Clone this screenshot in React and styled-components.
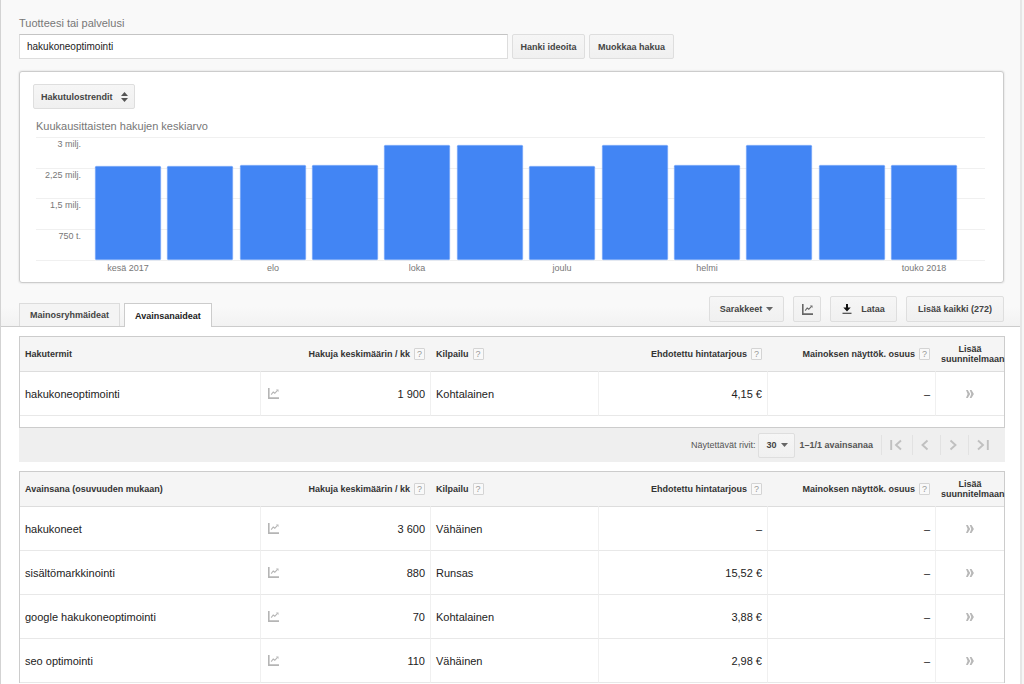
import React from 'react';
import styled, { createGlobalStyle, css } from 'styled-components';

const GlobalStyle = createGlobalStyle`
  * {
    box-sizing: border-box;
  }

  body {
    margin: 0;
    background: #f6f6f6;
    color: #222;
    font: 11px/14px 'Liberation Sans', Arial, sans-serif;
  }

  button,
  input,
  select {
    margin: 0;
    font-family: inherit;
  }
`;

const Page = styled.div`
  min-height: 100vh;
  margin-right: 2px;
  border-left: 1px solid #d3d3d3;
  border-right: 2px solid #e6e6e6;
  background: #fff;
`;

const TopArea = styled.header`
  padding: 16px 16px 0 18px;
  border-bottom: 1px solid #ccc;
  background: linear-gradient(#f9f9f9, #f9f9f9 94%, #f2f2f2);
`;

const FieldLabel = styled.label`
  display: block;
  color: #777;
`;

const SearchRow = styled.form`
  display: flex;
  gap: 4px;
  margin-top: 4px;
`;

const SearchInput = styled.input`
  flex: 0 1 489px;
  min-width: 0;
  height: 25px;
  padding: 0 7px;
  border: 1px solid #ddd;
  border-top-color: #c4c4c4;
  background: #fff;
  color: #222;
  font-size: 10px;
`;

const buttonFace = css`
  border: 1px solid #dedede;
  border-radius: 2px;
  background: linear-gradient(#f6f6f6, #f0f0f0);
  color: #444;
  font-size: 9px;
  font-weight: bold;
`;

const Button = styled.button`
  ${buttonFace}
  display: inline-flex;
  align-items: center;
  justify-content: center;
  gap: ${({ $gap }) => $gap || 4}px;
  width: ${({ $width }) => $width}px;
  height: ${({ $tall }) => ($tall ? 26 : 25)}px;
  padding: 0;
  white-space: nowrap;
`;

const SelectBox = styled.div`
  position: relative;
  display: inline-flex;
  width: ${({ $width }) => $width}px;

  select {
    ${buttonFace}
    width: 100%;
    height: 25px;
    padding: 0 0 0 7px;
    appearance: none;
  }

  svg {
    position: absolute;
    top: 50%;
    right: 7px;
    transform: translateY(-50%);
    pointer-events: none;
  }
`;

const TrendPanel = styled.section`
  margin-top: 12px;
  padding: 12px 18px 8px 16px;
  border: 1px solid #ccc;
  border-radius: 3px;
  background: #fff;
  box-shadow: 0 0 1px 1px #ececec;

  ${SelectBox} {
    display: flex;
    margin-left: -3px;
  }
`;

const ChartTitle = styled.h2`
  margin: 10px 0 4px;
  color: #777;
  font-size: 11px;
  font-weight: normal;
`;

const ChartSvg = styled.svg`
  display: block;
  width: 100%;

  text {
    fill: #777;
    font-size: 9px;
  }
`;

const Toolbar = styled.div`
  display: flex;
  align-items: flex-end;
  justify-content: space-between;
  height: 43px;
`;

const Tabs = styled.div`
  display: flex;
  gap: 4px;
`;

const Tab = styled.button`
  height: 23px;
  padding: 0 10px;
  border: 1px solid #dcdcdc;
  border-bottom: 0;
  background: #f4f4f4;
  color: #444;
  font-size: 9px;
  font-weight: bold;

  ${({ $active }) =>
    $active &&
    css`
      height: 24px;
      margin-bottom: -1px;
      border-color: #ccc;
      background: #fff;
      color: #222;
    `}
`;

const Actions = styled.div`
  display: flex;
  gap: 9px;
  padding-bottom: 4px;
`;

const Results = styled.main`
  display: grid;
  gap: 9px;
  padding: 9px 15px 0 18px;
`;

const TableFrame = styled.div`
  padding-bottom: ${({ $footer }) => ($footer ? 11 : 0)}px;
  border: 1px solid #ccc;
  border-bottom-width: ${({ $footer }) => ($footer ? 1 : 0)}px;
`;

const Table = styled.table`
  width: 100%;
  border-spacing: 0;
  table-layout: fixed;
`;

const cell = css`
  padding: 0 5px;
  border-left: 1px solid transparent;
  text-align: ${({ $align }) => $align || 'left'};

  &:first-child {
    border-left: 0;
  }
`;

const HeadCell = styled.th`
  ${cell}
  width: ${({ $width }) => ($width ? `${$width}px` : 'auto')};
  height: 35px;
  border-bottom: 1px solid #ddd;
  background: #f5f5f5;
  color: #333;
  font-size: 9px;
  line-height: 10px;
`;

const HeadLabel = styled.span`
  display: inline-flex;
  align-items: center;
  gap: 4px;
  white-space: nowrap;
`;

const Help = styled.button`
  width: 11px;
  height: 12px;
  padding: 0;
  border: 1px solid #d4d4d4;
  border-radius: 1px;
  background: #f9f9f9;
  color: #999;
  font-size: 9px;
  line-height: 10px;
`;

const Cell = styled.td`
  ${cell}
  height: 44px;
  border-bottom: 1px solid #e8e8e8;
  border-left-color: #f0f0f0;
`;

const Volume = styled.div`
  display: flex;
  align-items: center;
  justify-content: space-between;
  padding-left: 2px;
`;

const IconButton = styled.button`
  display: inline-flex;
  padding: 0;
  border: 0;
  background: none;
`;

const Pager = styled.nav`
  display: flex;
  align-items: center;
  justify-content: flex-end;
  height: 34px;
  padding-right: 6px;
  background: #efefef;
  color: #555;
  font-size: 9px;

  ${SelectBox} {
    margin: 0 4px 0 3px;
  }
`;

const PagerCount = styled.strong`
  margin-right: 8px;
`;

const PagerButton = styled.button`
  display: flex;
  align-items: center;
  justify-content: center;
  width: ${({ $wide }) => ($wide ? 31 : 28)}px;
  height: 20px;
  padding: 0 3px 0 0;
  border: 0;
  border-left: 1px solid #e2e2e2;
  background: none;
`;

const months = [
  { label: 'kesä 2017', top: 29 },
  { top: 29 },
  { label: 'elo', top: 28 },
  { top: 28 },
  { label: 'loka', top: 8 },
  { top: 8 },
  { label: 'joulu', top: 29 },
  { top: 8 },
  { label: 'helmi', top: 28 },
  { top: 8 },
  { top: 28 },
  { label: 'touko 2018', top: 28 },
];

const gridLines = [
  { y: 0, label: '3 milj.' },
  { y: 31, label: '2,25 milj.' },
  { y: 61, label: '1,5 milj.' },
  { y: 92, label: '750 t.' },
  { y: 123 },
];

const searchTerms = [
  { keyword: 'hakukoneoptimointi', volume: '1 900', competition: 'Kohtalainen', bid: '4,15 €' },
];

const ideas = [
  { keyword: 'hakukoneet', volume: '3 600', competition: 'Vähäinen', bid: '–' },
  { keyword: 'sisältömarkkinointi', volume: '880', competition: 'Runsas', bid: '15,52 €' },
  { keyword: 'google hakukoneoptimointi', volume: '70', competition: 'Kohtalainen', bid: '3,88 €' },
  { keyword: 'seo optimointi', volume: '110', competition: 'Vähäinen', bid: '2,98 €' },
];

function CaretIcon() {
  return (
    <svg width="7" height="4" viewBox="0 0 7 4" aria-hidden="true">
      <path d="M0 0h7L3.5 4z" fill="#666" />
    </svg>
  );
}

function SortIcon() {
  return (
    <svg width="7" height="10" viewBox="0 0 7 10" aria-hidden="true">
      <path d="M0 4h7L3.5 0zM0 6h7L3.5 10z" fill="#555" />
    </svg>
  );
}

function TrendIcon({ color = '#b5b5b5' }) {
  return (
    <svg width="11" height="11" viewBox="0 0 11 11" fill="none" stroke={color} aria-hidden="true">
      <path d="M.8 0v10.1H11" strokeWidth="1.6" />
      <path d="M3.2 6.6 5.2 4 6.8 5.3 9.2 2.6" strokeWidth="1.1" />
      <path d="M8 1.6h2.5V4z" fill={color} stroke="none" />
    </svg>
  );
}

function DownloadIcon() {
  return (
    <svg width="10" height="10" viewBox="0 0 10 10" aria-hidden="true">
      <path d="M4 0h2v3.6h2.7L5 7.6 1.3 3.6H4z" fill="#111" />
      <path d="M.5 9.3h9" stroke="#444" strokeWidth="1.2" />
    </svg>
  );
}

function AddIcon() {
  return (
    <svg width="8" height="8" viewBox="0 0 8 8" fill="#b8b8b8" aria-hidden="true">
      <path d="M0 0h1.8l2.4 4-2.4 4H0l1.6-4zM3.7 0h1.8l2.4 4-2.4 4H3.7l1.6-4z" />
    </svg>
  );
}

const pagerPaths = {
  first: 'M1.2 1v10M11 1.5 6 6l5 4.5',
  previous: 'M8.5 1.5 3.5 6l5 4.5',
  next: 'M3.5 1.5 8.5 6l-5 4.5',
  last: 'M1 1.5 6 6l-5 4.5M10.8 1v10',
};

function PagerIcon({ name }) {
  return (
    <svg width="12" height="12" viewBox="0 0 12 12" fill="none" stroke="#c0c0c0" strokeWidth="1.9" aria-hidden="true">
      <path d={pagerPaths[name]} />
    </svg>
  );
}

function TrendChart() {
  return (
    <ChartSvg viewBox="0 0 949 137" role="img" aria-label="Kuukausittaisten hakujen keskiarvo">
      {gridLines.map(({ y, label }) => (
        <g key={y}>
          <rect x="0" y={y} width="949" height="1" fill="#f0f0f0" />
          {label && (
            <text x="45" y={y + 10} textAnchor="end">
              {label}
            </text>
          )}
        </g>
      ))}
      {months.map(({ label, top }, index) => {
        const x = 59 + Math.round(index * 72.36);
        return (
          <g key={x}>
            <rect
              x={x + 0.25}
              y={top + 0.25}
              width="65.5"
              height={122.5 - top}
              rx="1"
              fill="#4285f4"
              stroke="#8ab3f8"
              strokeWidth="0.5"
            />
            {label && (
              <text x={x + 33} y="134" textAnchor="middle">
                {label}
              </text>
            )}
          </g>
        );
      })}
    </ChartSvg>
  );
}

function HeadWithHelp({ children, ...props }) {
  return (
    <HeadCell {...props}>
      <HeadLabel>
        {children}
        <Help type="button" aria-label={`Ohje: ${children}`}>
          ?
        </Help>
      </HeadLabel>
    </HeadCell>
  );
}

function KeywordTable({ title, rows, footer }) {
  return (
    <TableFrame $footer={footer}>
      <Table>
        <thead>
          <tr>
            <HeadCell>{title}</HeadCell>
            <HeadWithHelp $width={170} $align="right">Hakuja keskimäärin / kk</HeadWithHelp>
            <HeadWithHelp $width={168}>Kilpailu</HeadWithHelp>
            <HeadWithHelp $width={169} $align="right">Ehdotettu hintatarjous</HeadWithHelp>
            <HeadWithHelp $width={168} $align="right">Mainoksen näyttök. osuus</HeadWithHelp>
            <HeadCell $width={69} $align="center">Lisää suunnitelmaan</HeadCell>
          </tr>
        </thead>
        <tbody>
          {rows.map((row) => (
            <tr key={row.keyword}>
              <Cell>{row.keyword}</Cell>
              <Cell>
                <Volume>
                  <IconButton type="button" aria-label="Näytä trendi">
                    <TrendIcon />
                  </IconButton>
                  {row.volume}
                </Volume>
              </Cell>
              <Cell>{row.competition}</Cell>
              <Cell $align="right">{row.bid}</Cell>
              <Cell $align="right">–</Cell>
              <Cell $align="center">
                <IconButton type="button" aria-label="Lisää suunnitelmaan">
                  <AddIcon />
                </IconButton>
              </Cell>
            </tr>
          ))}
        </tbody>
      </Table>
    </TableFrame>
  );
}

export default function App() {
  return (
    <>
      <GlobalStyle />
      <Page>
        <TopArea>
          <FieldLabel htmlFor="product">Tuotteesi tai palvelusi</FieldLabel>
          <SearchRow onSubmit={(event) => event.preventDefault()}>
            <SearchInput id="product" type="text" defaultValue="hakukoneoptimointi" />
            <Button type="submit" $width={73}>Hanki ideoita</Button>
            <Button type="button" $width={85}>Muokkaa hakua</Button>
          </SearchRow>

          <TrendPanel>
            <SelectBox $width={102}>
              <select aria-label="Kaavio" defaultValue="trends">
                <option value="trends">Hakutulostrendit</option>
              </select>
              <SortIcon />
            </SelectBox>
            <ChartTitle>Kuukausittaisten hakujen keskiarvo</ChartTitle>
            <TrendChart />
          </TrendPanel>

          <Toolbar>
            <Tabs role="tablist">
              <Tab type="button" role="tab" aria-selected="false">Mainosryhmäideat</Tab>
              <Tab type="button" role="tab" aria-selected="true" $active>Avainsanaideat</Tab>
            </Tabs>
            <Actions>
              <Button type="button" $tall $width={75}>
                Sarakkeet
                <CaretIcon />
              </Button>
              <Button type="button" $tall $width={28} aria-label="Kaavio">
                <TrendIcon color="#666" />
              </Button>
              <Button type="button" $tall $width={67} $gap={9}>
                <DownloadIcon />
                Lataa
              </Button>
              <Button type="button" $tall $width={98}>Lisää kaikki (272)</Button>
            </Actions>
          </Toolbar>
        </TopArea>

        <Results>
          <div>
            <KeywordTable title="Hakutermit" rows={searchTerms} footer />
            <Pager aria-label="Sivutus">
              <label htmlFor="row-count">Näytettävät rivit:</label>
              <SelectBox $width={37}>
                <select id="row-count" defaultValue="30">
                  <option value="30">30</option>
                </select>
                <CaretIcon />
              </SelectBox>
              <PagerCount>1–1/1 avainsanaa</PagerCount>
              <PagerButton type="button" $wide aria-label="Ensimmäinen sivu">
                <PagerIcon name="first" />
              </PagerButton>
              <PagerButton type="button" aria-label="Edellinen sivu">
                <PagerIcon name="previous" />
              </PagerButton>
              <PagerButton type="button" aria-label="Seuraava sivu">
                <PagerIcon name="next" />
              </PagerButton>
              <PagerButton type="button" $wide aria-label="Viimeinen sivu">
                <PagerIcon name="last" />
              </PagerButton>
            </Pager>
          </div>
          <KeywordTable title="Avainsana (osuvuuden mukaan)" rows={ideas} />
        </Results>
      </Page>
    </>
  );
}
